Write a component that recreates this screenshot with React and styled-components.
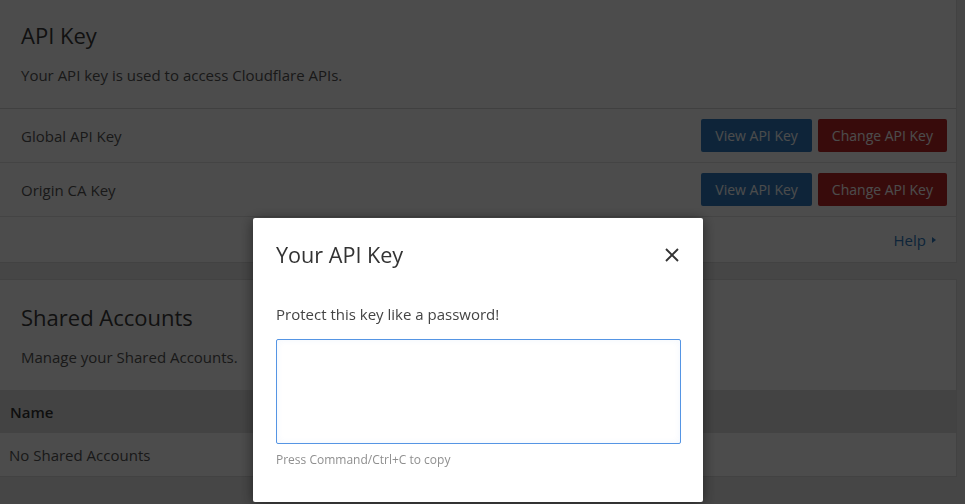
import React from 'react';
import styled, { createGlobalStyle } from 'styled-components';

const GlobalStyle = createGlobalStyle`
  html, body {
    margin: 0;
    padding: 0;
    height: 100%;
    overflow: hidden;
  }
  body {
    background: #ebebeb;
    font-family: "Open Sans", "Liberation Sans", sans-serif;
    color: #444;
  }
`;

const Page = styled.div`
  width: 957px;
  height: 504px;
  display: flex;
  flex-direction: column;
  gap: 16px;
`;

const Card = styled.section`
  background: #fff;
  border: 1px solid #dcdcdc;
  border-left: none;
  border-top: ${({ flushTop }) => (flushTop ? 'none' : '1px solid #dcdcdc')};
`;

const CardHeader = styled.div`
  padding: ${({ top }) => top}px 21px 22px;
  border-bottom: ${({ divided }) => (divided ? '1px solid #d8d8d8' : 'none')};
`;

const CardTitle = styled.h2`
  margin: 0 0 14px;
  font-size: 22px;
  font-weight: 400;
  line-height: 30px;
  color: #3a3a3a;
`;

const CardText = styled.p`
  margin: 0;
  font-size: 15px;
  line-height: 22px;
  color: #555;
`;

const Row = styled.div`
  height: 54px;
  box-sizing: border-box;
  display: flex;
  align-items: center;
  justify-content: space-between;
  padding: 0 9px 0 21px;
  border-bottom: 1px solid #e3e3e3;
`;

const RowLabel = styled.span`
  font-size: 15px;
  color: #555;
`;

const Actions = styled.div`
  display: flex;
  gap: 6px;
`;

const Button = styled.button`
  height: 33px;
  padding: 0 14px;
  border: none;
  border-radius: 2px;
  font-family: inherit;
  font-size: 14px;
  color: #fff;
  background: ${({ danger }) => (danger ? '#bd2527' : '#2f7bbf')};
  cursor: pointer;
`;

const Footer = styled.div`
  height: 45px;
  display: flex;
  align-items: center;
  justify-content: flex-end;
  padding: 0 20px;
`;

const HelpLink = styled.a`
  display: flex;
  align-items: center;
  gap: 6px;
  font-size: 15px;
  color: #2f7bbf;
  text-decoration: none;
`;

const Caret = styled.span`
  width: 0;
  height: 0;
  border-top: 3.5px solid transparent;
  border-bottom: 3.5px solid transparent;
  border-left: 4px solid #2f7bbf;
`;

const TableHead = styled.div`
  height: 43px;
  display: flex;
  align-items: center;
  padding: 0 10px;
  background: #e2e2e2;
  font-size: 15px;
  font-weight: 600;
  color: #333;
`;

const TableRow = styled.div`
  height: 43px;
  display: flex;
  align-items: center;
  padding: 0 9px;
  font-size: 15px;
  color: #555;
`;

const Overlay = styled.div`
  position: fixed;
  inset: 0;
  background: rgba(0, 0, 0, 0.7);
  padding: 218px 0 0 253px;
`;

const Modal = styled.div`
  width: 450px;
  height: 284px;
  box-sizing: border-box;
  background: #fff;
  border-radius: 2px;
  box-shadow: 0 2px 14px rgba(0, 0, 0, 0.5);
  padding: 0 24px 0 23px;
`;

const ModalHeader = styled.div`
  height: 73px;
  display: flex;
  align-items: center;
  justify-content: space-between;
`;

const ModalTitle = styled.h3`
  margin: 0;
  font-size: 21.6px;
  font-weight: 400;
  color: #333;
`;

const Close = styled.button`
  border: none;
  background: none;
  padding: 0;
  display: flex;
  cursor: pointer;
`;

const ModalText = styled.p`
  margin: 12px 0 14px;
  font-size: 15px;
  line-height: 22px;
  color: #444;
`;

const KeyBox = styled.textarea`
  display: block;
  width: 405px;
  height: 105px;
  box-sizing: border-box;
  border: 1px solid #5595e4;
  border-radius: 2px;
  background: #fff;
  box-shadow: inset 0 0 6px rgba(74, 143, 224, 0.08);
  resize: none;
  outline: none;
  font-family: inherit;
`;

const Hint = styled.div`
  margin-top: 7px;
  font-size: 12px;
  color: #8f8f8f;
`;

const keyRows = ['Global API Key', 'Origin CA Key'];

export default function App() {
  return (
    <>
      <GlobalStyle />
      <Page>
        <Card flushTop>
          <CardHeader top={20} divided>
            <CardTitle>API Key</CardTitle>
            <CardText>Your API key is used to access Cloudflare APIs.</CardText>
          </CardHeader>
          {keyRows.map((label) => (
            <Row key={label}>
              <RowLabel>{label}</RowLabel>
              <Actions>
                <Button>View API Key</Button>
                <Button danger>Change API Key</Button>
              </Actions>
            </Row>
          ))}
          <Footer>
            <HelpLink href="#">
              Help <Caret />
            </HelpLink>
          </Footer>
        </Card>
        <Card>
          <CardHeader top={22}>
            <CardTitle>Shared Accounts</CardTitle>
            <CardText>Manage your Shared Accounts.</CardText>
          </CardHeader>
          <TableHead>Name</TableHead>
          <TableRow>No Shared Accounts</TableRow>
        </Card>
      </Page>
      <Overlay>
        <Modal>
          <ModalHeader>
            <ModalTitle>Your API Key</ModalTitle>
            <Close aria-label="Close">
              <svg width="14" height="14" viewBox="0 0 14 14">
                <path d="M1 1L13 13M13 1L1 13" stroke="#333" strokeWidth="1.9" />
              </svg>
            </Close>
          </ModalHeader>
          <ModalText>Protect this key like a password!</ModalText>
          <KeyBox readOnly />
          <Hint>Press Command/Ctrl+C to copy</Hint>
        </Modal>
      </Overlay>
    </>
  );
}
